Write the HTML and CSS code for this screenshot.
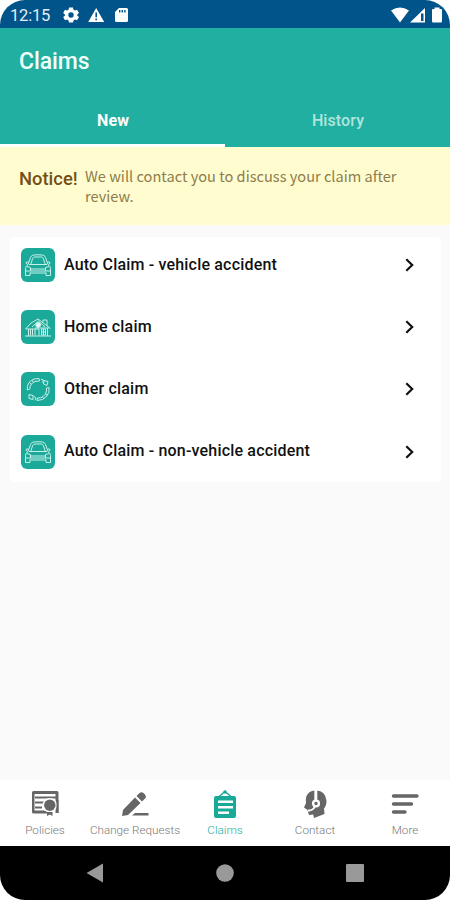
FILE: index.html
```html
<!DOCTYPE html>
<html lang="en">
<head>
<meta charset="utf-8">
<title>Claims</title>
<link rel="stylesheet" href="styles.css">
</head>
<body>
<svg class="defs" aria-hidden="true">
  <symbol id="car" viewBox="0 0 34 34">
    <path d="M7 16.500 L9.500 9.500 Q10.300 7.300 12.500 7 Q17 6.500 21.500 7 Q23.700 7.300 24.500 9.500 L27 16.500 M9.800 16 L11.700 10.500 Q12 9.300 13.500 9 H20.500 Q22 9.300 22.300 10.500 L24.200 16 M8 16.500 H26 M7.500 14 H5.500 Q4 15 6.500 16.500 M26.500 14 H28.500 Q30 15 27.500 16.500 M7 16.500 Q4.500 18 4.500 20.500 V27.500 H9 V24.500 M27 16.500 Q29.500 18 29.500 20.500 V27.500 H25 V24.500 M9 25 H25 M4.500 23 H29.500 M10 21 H24 M6 18.500 L9.500 19.500 V23 M28 18.500 L24.500 19.500 V23"/>
  </symbol>
  <symbol id="house" viewBox="0 0 34 34">
    <path d="M4 26 H30 M7.500 26 V19 M26.500 26 V18 M4.500 19 L10 13 L17 9 L29.500 18.500 M5 19 H14 M11 17 L17.500 11 L24 17 M22 12.500 V10 H26 V16 M14 25.500 V19 H18 V25.500 M9.500 19 V25.500 M11.500 19 V25.500 M20.500 19 H24.500 V25 H20.500 Z M22.500 19 V25 M20.500 22 H24.500 M14 18 H28"/>
    <circle class="solid" cx="17.200" cy="15" r="2.400"/>
  </symbol>
  <symbol id="cycle" viewBox="0 0 34 34">
    <path d="M6.300 18 Q5.500 10 13 7 M8.800 17 Q9 11.500 14 9.500 M6.300 18 L8.800 17 M8.500 10.500 L10.500 12.500 M11 8 L12.500 10.500 M13 7 L18 6.500 L18.500 9 L14 9.500 M20 7.300 L22.500 8 L21.500 10.500 M23 8.500 L27 9.500 L26 13.500 L22.500 12 Z M25.500 16 V19 M28 15.500 Q29 20.500 25.500 24.500 M25.500 19 Q25 22.500 22 24.500 M25.500 16 L28 15.500 M25.500 24.500 Q22 28.500 16 28.500 M22 24.500 Q20 26.200 16.500 26 L16 28.500 M21.500 25 L23 27 M24.500 22 L26.500 23.500 M12 27.500 L8 26.500 L8 22.500 L12 23.500 Z M12.500 24 L15 26 L14 28.300"/>
  </symbol>
  <symbol id="chevron" viewBox="0 0 12 16">
    <path d="M2.300 2.300 L8.200 8 L2.300 13.700"/>
  </symbol>
</svg>
<div class="phone">
  <div class="status">
    <span class="clock">12:15</span>
    <svg class="status-left" viewBox="0 0 66 16">
      <g fill="#fff">
        <path fill-rule="evenodd" d="M6 0.500 H10 L10.500 2.700 L12 3.500 L14 2.800 L16 6 L14.300 7.500 V8.800 L16 10 L14 13.300 L12 12.500 L10.500 13.500 L10 15.500 H6 L5.500 13.500 L4 12.500 L2 13.300 L0.200 10 L1.900 8.800 V7.500 L0.200 6 L2 2.800 L4 3.500 L5.500 2.700 Z M8 5.300 A2.700 2.700 0 1 0 8 10.700 A2.700 2.700 0 1 0 8 5.300 Z"/>
        <path fill-rule="evenodd" d="M33.200 1 L41.200 15 H25.200 Z M32.400 5.500 V10.300 H34 V5.500 Z M32.400 11.500 V13.200 H34 V11.500 Z"/>
        <path fill-rule="evenodd" d="M56 1 H63.500 Q65 1 65 2.500 V13.700 Q65 15 63.500 15 H53.500 Q52 15 52 13.700 V5 Z M56 3 V5.500 H57.400 V3 Z M58.600 3 V5.500 H60 V3 Z M61.200 3 V5.500 H62.600 V3 Z"/>
      </g>
    </svg>
    <svg class="status-right" viewBox="0 0 52 16">
      <g fill="#fff">
        <path d="M0 3.500 Q9 -2.500 18 3.500 L9 15.500 Z"/>
        <path fill-rule="evenodd" d="M34 1 V15.500 H19 Z M30 6.500 V14 H32.500 V6.500 Z"/>
        <path d="M43.500 0.500 H48.500 V2 H50 Q51 2 51 3 V14 Q51 15.500 50 15.500 H42 Q41 15.500 41 14 V3 Q41 2 42 2 H43.500 Z"/>
      </g>
    </svg>
  </div>
  <header class="header">
    <h1>Claims</h1>
    <nav class="tabs">
      <div class="tab tab-active"><span>New</span></div>
      <div class="tab"><span>History</span></div>
    </nav>
  </header>
  <section class="notice">
    <strong>Notice!</strong>
    <p>We will contact you to discuss your claim after<br>review.</p>
  </section>
  <main class="content">
    <ul class="card">
      <li class="row"><svg class="tile"><use href="#car"/></svg><span class="label">Auto Claim - vehicle accident</span><svg class="chevron"><use href="#chevron"/></svg></li>
      <li class="row"><svg class="tile"><use href="#house"/></svg><span class="label">Home claim</span><svg class="chevron"><use href="#chevron"/></svg></li>
      <li class="row"><svg class="tile"><use href="#cycle"/></svg><span class="label">Other claim</span><svg class="chevron"><use href="#chevron"/></svg></li>
      <li class="row"><svg class="tile"><use href="#car"/></svg><span class="label">Auto Claim - non-vehicle accident</span><svg class="chevron"><use href="#chevron"/></svg></li>
    </ul>
  </main>
  <nav class="bottom">
    <div class="item">
      <svg viewBox="0 0 30 30">
        <path fill="#666" fill-rule="evenodd" d="M3.500 2 H27 Q28.500 2 28.500 3.500 V24 H25.500 V5 H4.500 V21.500 H17 V24.500 H3.500 Q2 24.500 2 23 V3.500 Q2 2 3.500 2 Z"/>
        <path fill="#666" d="M5 7.500 H26 V9.500 H5 Z M5 12.500 H14 V14.500 H5 Z M5 17.500 H12 V19.500 H5 Z"/>
        <circle cx="19.800" cy="16.300" r="7.300" fill="#fff"/>
        <circle cx="19.800" cy="16.300" r="5.700" fill="#666"/>
        <path fill="#666" d="M26.500 11 H28.500 V24 H26.500 Z M17 23 H22.500 V27 L19.800 25.500 L17 27 Z"/>
      </svg>
      <span>Policies</span>
    </div>
    <div class="item">
      <svg viewBox="0 0 30 30">
        <path fill="#666" d="M2 27 L3 21 L15 8.500 L20.500 14 L8 26 Z M16.500 7 L19.500 4 Q21.500 2.300 23.500 4 L25 5.500 Q26.800 7.500 25 9.500 L22 12.500 Z M15 24 H28.500 V26.500 H12 Z"/>
      </svg>
      <span>Change Requests</span>
    </div>
    <div class="item item-active">
      <svg viewBox="0 0 30 30">
        <path fill="none" stroke="#18a999" stroke-width="1.500" d="M8.500 8 L15 2.500 L21.500 8"/>
        <path fill="#18a999" fill-rule="evenodd" d="M6 7 H24 Q26 7 26 9 V27 Q26 29 24 29 H6 Q4 29 4 27 V9 Q4 7 6 7 Z M8 11.500 V14 H23 V11.500 Z M8 17 V19.500 H23 V17 Z M8 22.500 V25 H19 V22.500 Z"/>
        <circle cx="15" cy="3" r="1.700" fill="#18a999"/>
      </svg>
      <span>Claims</span>
    </div>
    <div class="item">
      <svg viewBox="0 0 30 30">
        <path fill="#666" d="M14.500 1.500 Q25.500 0.500 26.500 12 Q26.500 17 24 19.500 L24.500 25 L14 29 L13.200 25.500 L9 26 L7.500 21 L4 18.500 L6 14 Q4.500 3 14.500 1.500 Z"/>
        <path fill="none" stroke="#fff" stroke-width="3" d="M15.800 1 V11"/>
        <path fill="none" stroke="#fff" stroke-width="1.900" d="M15 17 Q13 22 8 21.500"/>
        <circle cx="16" cy="14.500" r="2.900" fill="#666" stroke="#fff" stroke-width="2.400"/>
      </svg>
      <span>Contact</span>
    </div>
    <div class="item">
      <svg viewBox="0 0 30 30">
        <path stroke="#666" stroke-width="3.400" stroke-linecap="round" d="M3.500 7 H27 M3.500 15 H21.500 M3.500 23 H15"/>
      </svg>
      <span>More</span>
    </div>
  </nav>
  <div class="system">
    <svg viewBox="0 0 18 20"><path fill="#999" d="M17 0.500 V19.500 L0.500 10 Z"/></svg>
    <svg viewBox="0 0 18 20"><circle cx="9" cy="10" r="8.800" fill="#999"/></svg>
    <svg viewBox="0 0 18 20"><rect y="1" width="18" height="18" rx="1" fill="#999"/></svg>
  </div>
</div>
</body>
</html>
```
FILE: styles.css
```css
* { box-sizing: border-box; }
body { margin: 0; background: #fff; font-family: Roboto, sans-serif; }
.defs { display: none; }
.phone {
  width: 450px;
  height: 900px;
  display: flex;
  flex-direction: column;
  overflow: hidden;
  border-radius: 25px;
  background: #fafafa;
}
.status {
  height: 28px;
  flex: none;
  display: flex;
  align-items: center;
  padding: 1px 8px 0 10px;
  background: #005489;
  color: #e6eef5;
}
.clock { width: 53px; padding-top: 2px; font-size: 16.5px; letter-spacing: -0.2px; }
.status-left { width: 66px; height: 16px; }
.status-right { width: 52px; height: 16px; margin-left: auto; margin-right: -1px; }
.header {
  height: 119px;
  flex: none;
  display: flex;
  flex-direction: column;
  background: #20afa0;
  color: #fff;
}
h1 { margin: 0; padding: 20px 19px 0; height: 66px; font-size: 23px; line-height: 28px; font-weight: 500; letter-spacing: -0.1px; color: #effffc; }
.tabs { display: flex; flex: 1; }
.tab {
  flex: 1;
  display: flex;
  justify-content: center;
  padding-top: 17px;
  padding-left: 1px;
  font-size: 16px;
  line-height: 20px;
  font-weight: 500;
  color: #b1e5de;
  letter-spacing: 0.1px;
}
.tab-active { color: #fff; border-bottom: 3px solid #fff; font-weight: 700; }
.notice {
  height: 78px;
  flex: none;
  display: flex;
  padding: 19px;
  background: #fffdd0;
}
.notice strong { width: 66px; font-size: 18.4px; line-height: 26px; font-weight: 500; color: #745016; }
.notice p { margin: 0; font-family: "Noto Sans CJK JP", sans-serif; font-size: 14.6px; line-height: 20px; color: #8e7c4c; white-space: nowrap; }
.content { flex: 1; padding: 12px 9px 0 10px; }
.card { margin: 0; padding: 0 0 1px; height: 245px; list-style: none; background: #fff; border-radius: 4px; }
.row { height: 62.2px; display: flex; align-items: center; padding: 0 25px 6px 11px; }
.tile {
  width: 34px;
  height: 34px;
  border-radius: 6px;
  background: #1baa9a;
  fill: none;
  stroke: #c8efe8;
  stroke-width: 1;
}
.solid { fill: #e6faf7; }
.label { flex: 1; margin-left: 9px; margin-top: -2px; font-size: 16px; letter-spacing: 0.18px; font-weight: 500; color: #111; white-space: nowrap; }
.chevron { width: 12px; height: 16px; fill: none; stroke: #111; stroke-width: 2.2; }
.bottom { height: 66px; flex: none; display: flex; background: #fff; }
.item {
  flex: 1 1 0;
  min-width: 0;
  display: flex;
  flex-direction: column;
  align-items: center;
  padding-top: 9px;
  gap: 4px;
  color: #777;
  font-size: 11.7px;
  font-weight: 300;
  line-height: 14px;
  white-space: nowrap;
}
.item svg { width: 30px; height: 30px; flex: none; }
.item-active { color: #20afa0; }
.system {
  height: 54px;
  flex: none;
  display: flex;
  justify-content: space-between;
  padding: 17px 86px 0;
  background: #000;
}
.system svg { width: 18px; height: 20px; }
```
